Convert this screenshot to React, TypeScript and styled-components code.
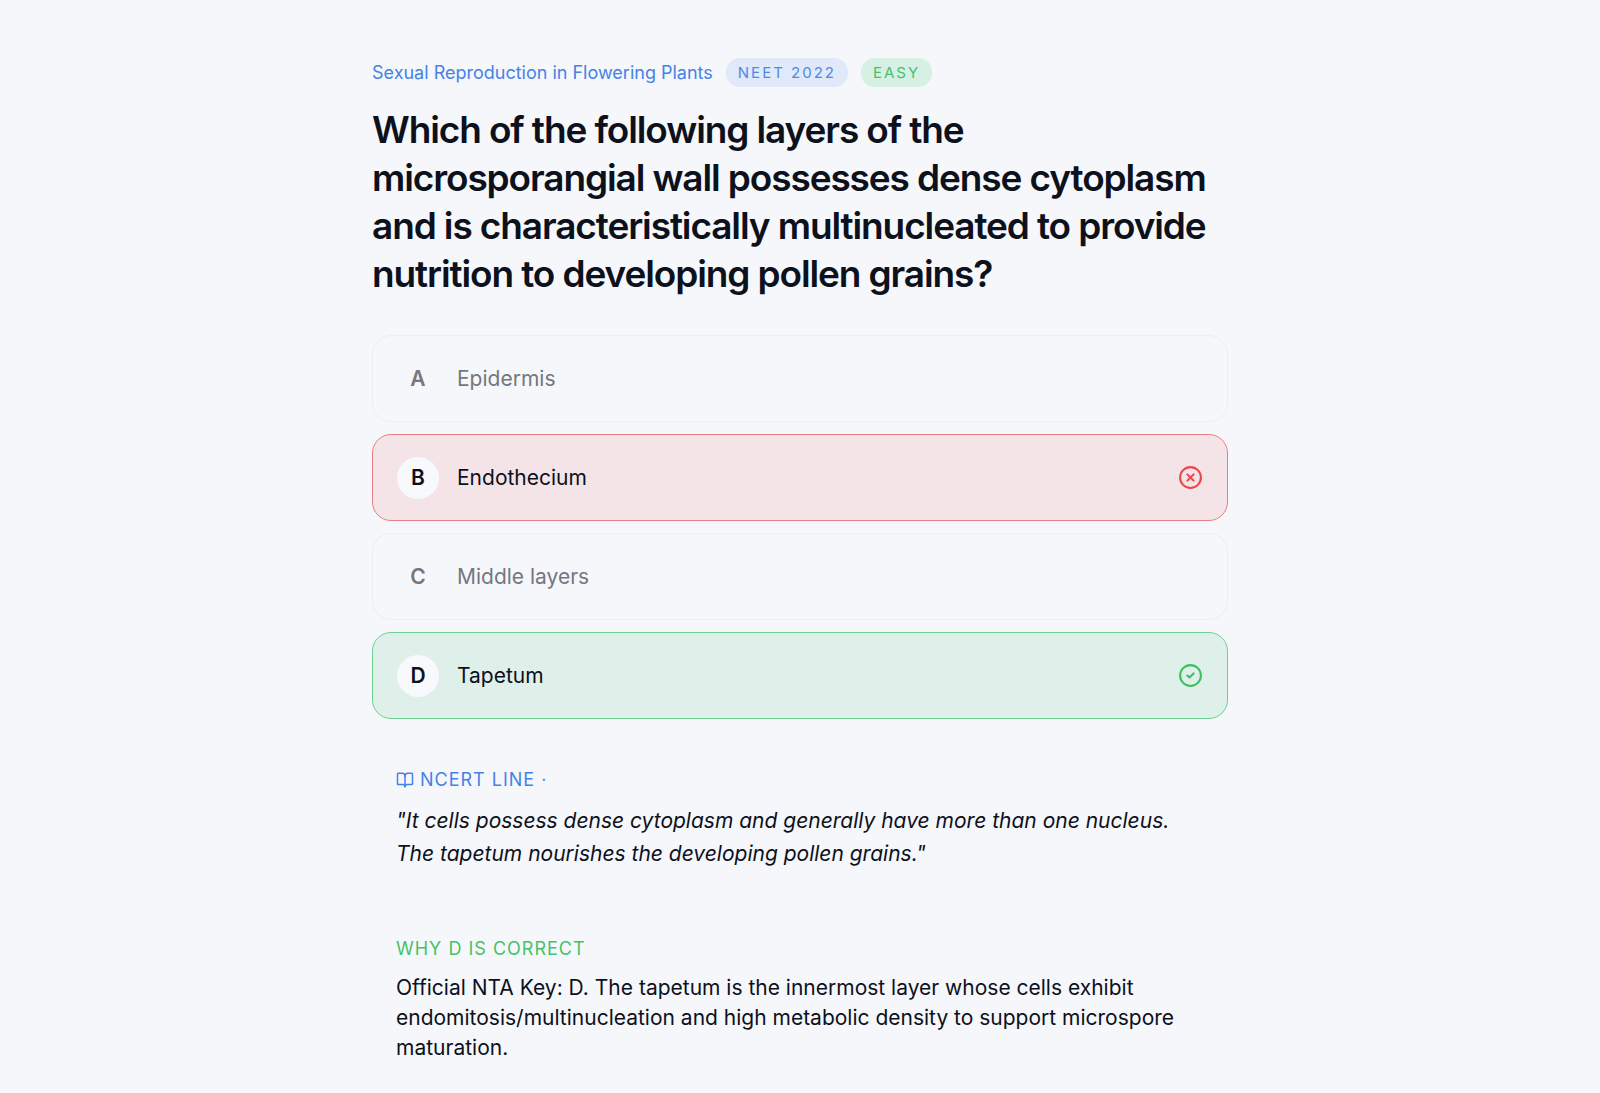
import React from "react";
import styled, { createGlobalStyle } from "styled-components";
import { BookOpen, CircleCheck, CircleX } from "lucide-react";

const GlobalStyle = createGlobalStyle`
  * { box-sizing: border-box; }
  body {
    margin: 0;
    background: #f5f7fb;
    color: #0d111c;
    font-family: Inter, "Liberation Sans", sans-serif;
  }
`;

const Page = styled.main`
  max-width: 904px;
  margin: 0 auto;
  padding: 58px 24px 32px;
`;

const MetaRow = styled.div`
  display: flex;
  flex-wrap: wrap;
  align-items: center;
  gap: 13px;
`;

const Topic = styled.span`
  font-size: 18px;
  line-height: 28px;
  color: #4682e6;
`;

const Pill = styled.span<{ $tone: "blue" | "green" }>`
  padding: 0 12px;
  border-radius: 14px;
  font-size: 15px;
  line-height: 29px;
  letter-spacing: 2px;
  color: ${(p) => (p.$tone === "blue" ? "#4f88e8" : "#45c267")};
  background: ${(p) => (p.$tone === "blue" ? "#e0e9fa" : "#d6f0e3")};
`;

const Question = styled.h1`
  margin: 19px 0 0;
  font-size: 37px;
  line-height: 48px;
  font-weight: 600;
  letter-spacing: -0.03em;
`;

const Options = styled.div`
  display: grid;
  gap: 12px;
  margin-top: 37px;
`;

type State = "idle" | "wrong" | "right";

const borders = { idle: "#eceef3", wrong: "#e87f86", right: "#72cf92" };
const fills = { idle: "transparent", wrong: "#f4e4e7", right: "#dff0ea" };

const Option = styled.button<{ $state: State }>`
  display: flex;
  align-items: center;
  gap: 18px;
  min-height: 87px;
  padding: 0 24px;
  border: 1px solid ${(p) => borders[p.$state]};
  border-radius: 19px;
  background: ${(p) => fills[p.$state]};
  color: ${(p) => (p.$state === "idle" ? "#74777f" : "#0d111c")};
  font: inherit;
  text-align: left;
`;

const Letter = styled.span<{ $filled: boolean }>`
  display: grid;
  place-items: center;
  width: 42px;
  height: 42px;
  border-radius: 50%;
  background: ${(p) => (p.$filled ? "#f7f9fd" : "transparent")};
  font-size: 21px;
  font-weight: 600;
`;

const OptionText = styled.span`
  flex: 1;
  font-size: 21px;
  line-height: 30px;
`;

const Note = styled.section`
  padding: 0 24px;
  margin-top: 47px;

  & + & {
    margin-top: 65px;
  }
`;

const NoteTitle = styled.h2<{ $tone: "blue" | "green" }>`
  display: flex;
  align-items: center;
  gap: 6px;
  margin: 0;
  font-size: 18px;
  line-height: 28px;
  font-weight: 400;
  letter-spacing: 1px;
  color: ${(p) => (p.$tone === "blue" ? "#4682e6" : "#45c267")};
`;

const Quote = styled.blockquote`
  margin: 10px 0 0;
  font-size: 21px;
  line-height: 33px;
  font-style: italic;
`;

const Explanation = styled.p`
  margin: 10px 0 0;
  font-size: 21px;
  line-height: 30px;
`;

const options: { letter: string; text: string; state: State }[] = [
  { letter: "A", text: "Epidermis", state: "idle" },
  { letter: "B", text: "Endothecium", state: "wrong" },
  { letter: "C", text: "Middle layers", state: "idle" },
  { letter: "D", text: "Tapetum", state: "right" },
];

export default function App() {
  return (
    <>
      <GlobalStyle />
      <Page>
        <MetaRow>
          <Topic>Sexual Reproduction in Flowering Plants</Topic>
          <Pill $tone="blue">NEET 2022</Pill>
          <Pill $tone="green">EASY</Pill>
        </MetaRow>
        <Question>
          Which of the following layers of the microsporangial wall possesses dense cytoplasm and is
          characteristically multinucleated to provide nutrition to developing pollen grains?
        </Question>
        <Options>
          {options.map((o) => (
            <Option key={o.letter} type="button" $state={o.state}>
              <Letter $filled={o.state !== "idle"}>{o.letter}</Letter>
              <OptionText>{o.text}</OptionText>
              {o.state === "wrong" && <CircleX size={25} color="#e8474c" aria-hidden />}
              {o.state === "right" && <CircleCheck size={25} color="#3dbf5f" aria-hidden />}
            </Option>
          ))}
        </Options>
        <Note>
          <NoteTitle $tone="blue">
            <BookOpen size={18} strokeWidth={2} aria-hidden />
            NCERT LINE ·
          </NoteTitle>
          <Quote>
            "It cells possess dense cytoplasm and generally have more than one nucleus. The tapetum
            nourishes the developing pollen grains."
          </Quote>
        </Note>
        <Note>
          <NoteTitle $tone="green">WHY D IS CORRECT</NoteTitle>
          <Explanation>
            Official NTA Key: D. The tapetum is the innermost layer whose cells exhibit
            endomitosis/multinucleation and high metabolic density to support microspore maturation.
          </Explanation>
        </Note>
      </Page>
    </>
  );
}
